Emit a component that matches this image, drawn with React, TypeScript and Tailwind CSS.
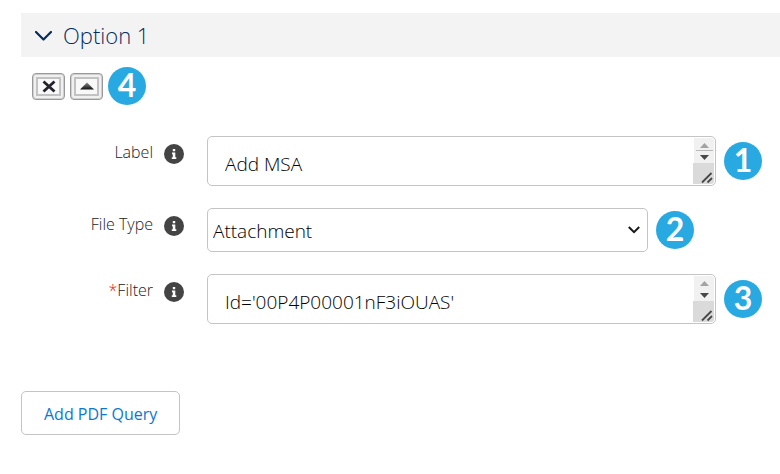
import { useState } from 'react';
import type { ReactNode } from 'react';
import { clsx } from 'clsx';

const fileTypes = ['Attachment', 'Document', 'Content Version'];

function StepBadge({ step }: { step: number }) {
    return (
        <span className="flex size-[38px] shrink-0 items-center justify-center rounded-full bg-[#29a9e1] pb-[3px] font-['Lato',sans-serif] text-[32px] leading-none font-bold text-white">
            {step}
        </span>
    );
}

function InfoIcon() {
    return (
        <svg viewBox="0 0 20 20" className="size-5 shrink-0" aria-hidden="true">
            <circle cx="10" cy="10" r="10" fill="#444444" />
            <path d="M8.8 5h2.4v2.2H8.8zM8 8.5h3.3v4.7h1V15H7.8v-1.8h1v-3H8z" fill="#ffffff" />
        </svg>
    );
}

function ToolButton({ label, children }: { label: string; children: ReactNode }) {
    return (
        <button
            type="button"
            aria-label={label}
            className="flex h-[27px] w-[33px] items-center justify-center rounded-[4px] border border-[#999999] bg-[#f0f0f0] p-[3px] inset-ring inset-ring-[#d0d0d0]"
        >
            <span className="flex size-full items-center justify-center border-2 border-[#c2c2c2] bg-[#f8f8f8]">
                {children}
            </span>
        </button>
    );
}

type FieldRowProps = {
    id: string;
    label: string;
    step: number;
    required?: boolean;
    className?: string;
    children: ReactNode;
};

function FieldRow({ id, label, step, required, className, children }: FieldRowProps) {
    return (
        <div className={clsx('flex items-start', className)}>
            <div className="flex w-[163px] shrink-0 justify-end gap-[11px] pt-1.5">
                <label htmlFor={id} className="text-base leading-5 font-light text-[#222222]">
                    {required && <span className="text-[#e52020]">*</span>}
                    {label}
                </label>
                <span className="pt-0.5">
                    <InfoIcon />
                </span>
            </div>
            <div className="ml-[23px] flex min-w-0 flex-1 items-center gap-2">
                {children}
                <StepBadge step={step} />
            </div>
        </div>
    );
}

type ScrollTextProps = {
    id: string;
    defaultValue: string;
    divided?: boolean;
};

function ScrollText({ id, defaultValue, divided }: ScrollTextProps) {
    return (
        <div className="flex h-[50px] min-w-0 flex-1 rounded-[5px] border border-[#c4c4c4] bg-white p-px">
            <textarea
                id={id}
                defaultValue={defaultValue}
                rows={1}
                className="min-w-0 flex-1 resize-none overflow-hidden px-4 pt-3 text-[19px] leading-7 font-light text-black outline-none"
            />
            {/* Scroll bar and resize grip */}
            <svg viewBox="0 0 21 46" className="h-[46px] w-[21px] shrink-0" aria-hidden="true">
                <path d="M1 0h17q3 0 3 3v24H1z" fill="#f1f1f1" />
                <path d="M0 25h21v18q0 3-3 3H0z" fill="#dadada" />
                <path d="M7 10 11.5 5 16 10z" fill="#a3a3a3" />
                {divided && <path d="M3 12.5h17" stroke="#b9b9b9" />}
                <path d="M7 17 11.5 22 16 17z" fill="#484848" />
                <path d="M9 44.5 18.5 35M14.5 44.5 19 40" stroke="#484848" strokeWidth="1.8" />
            </svg>
        </div>
    );
}

export default function App() {
    const [open, setOpen] = useState(true);
    const [fileType, setFileType] = useState(fileTypes[0]);

    return (
        <main className="bg-white pt-[13px] pb-10 pl-[21px] font-['Open_Sans','Noto_Sans',sans-serif]">
            <h2>
                <button
                    type="button"
                    aria-expanded={open}
                    onClick={() => setOpen(!open)}
                    className="flex h-11 w-full items-center gap-[11px] bg-[#f3f3f3] pl-3.5 text-[22px] leading-7 font-light text-[#032d60]"
                >
                    <svg viewBox="0 0 17 12" className="h-3 w-[17px]" fill="none" aria-hidden="true">
                        <path d="M1 3 8.5 10.5 16 3" stroke="#032d60" strokeWidth="2.2" strokeLinecap="round" strokeLinejoin="round" />
                    </svg>
                    Option 1
                </button>
            </h2>

            {open && (
                <>
                    {/* Toolbar */}
                    <div className="flex items-center gap-[5px] pt-2.5 pl-[11px]">
                        <ToolButton label="Remove option">
                            <svg viewBox="0 0 14 13" className="h-[13px] w-3.5" fill="none" aria-hidden="true">
                                <path d="M1.5 1.5 12.5 11.5M12.5 1.5 1.5 11.5" stroke="#22222a" strokeWidth="2.8" />
                            </svg>
                        </ToolButton>
                        <ToolButton label="Move option up">
                            <svg viewBox="0 0 16 8" className="h-2 w-4" aria-hidden="true">
                                <defs>
                                    <linearGradient id="arrow-shade" x1="0" y1="0" x2="0" y2="1">
                                        <stop offset="0" stopColor="#8a8a8a" />
                                        <stop offset="1" stopColor="#111111" />
                                    </linearGradient>
                                </defs>
                                <path d="M1 7.5 8 0.5 15 7.5z" fill="url(#arrow-shade)" />
                            </svg>
                        </ToolButton>
                        <StepBadge step={4} />
                    </div>

                    {/* Fields */}
                    <div className="flex flex-col gap-[22px] pt-[31px]">
                        <FieldRow id="label" label="Label" step={1} className="pr-[18px]">
                            <ScrollText id="label" defaultValue="Add MSA" divided />
                        </FieldRow>
                        <FieldRow id="file-type" label="File Type" step={2} className="pr-[86px]">
                            <div className="relative min-w-0 flex-1">
                                <select
                                    id="file-type"
                                    value={fileType}
                                    onChange={(e) => setFileType(e.target.value)}
                                    className="h-11 w-full appearance-none rounded-[5px] border border-[#c4c4c4] bg-white pt-0.5 pr-10 pl-[5px] text-[19px] leading-7 font-light text-black"
                                >
                                    {fileTypes.map((type) => (
                                        <option key={type}>{type}</option>
                                    ))}
                                </select>
                                <svg viewBox="0 0 12 8" className="pointer-events-none absolute top-[18px] right-2 h-2 w-3" fill="none" aria-hidden="true">
                                    <path d="M0.8 1 6 6.2 11.2 1" stroke="#181818" strokeWidth="2" />
                                </svg>
                            </div>
                        </FieldRow>
                        <FieldRow id="filter" label="Filter" step={3} required className="pr-[18px]">
                            <ScrollText id="filter" defaultValue="Id='00P4P00001nF3iOUAS'" />
                        </FieldRow>
                    </div>
                </>
            )}

            <button
                type="button"
                className="mt-[67px] h-11 rounded-[5px] border border-[#c4c4c4] bg-white px-[22px] pt-0.5 text-base leading-6 text-[#0b78d0]"
            >
                Add PDF Query
            </button>
        </main>
    );
}
